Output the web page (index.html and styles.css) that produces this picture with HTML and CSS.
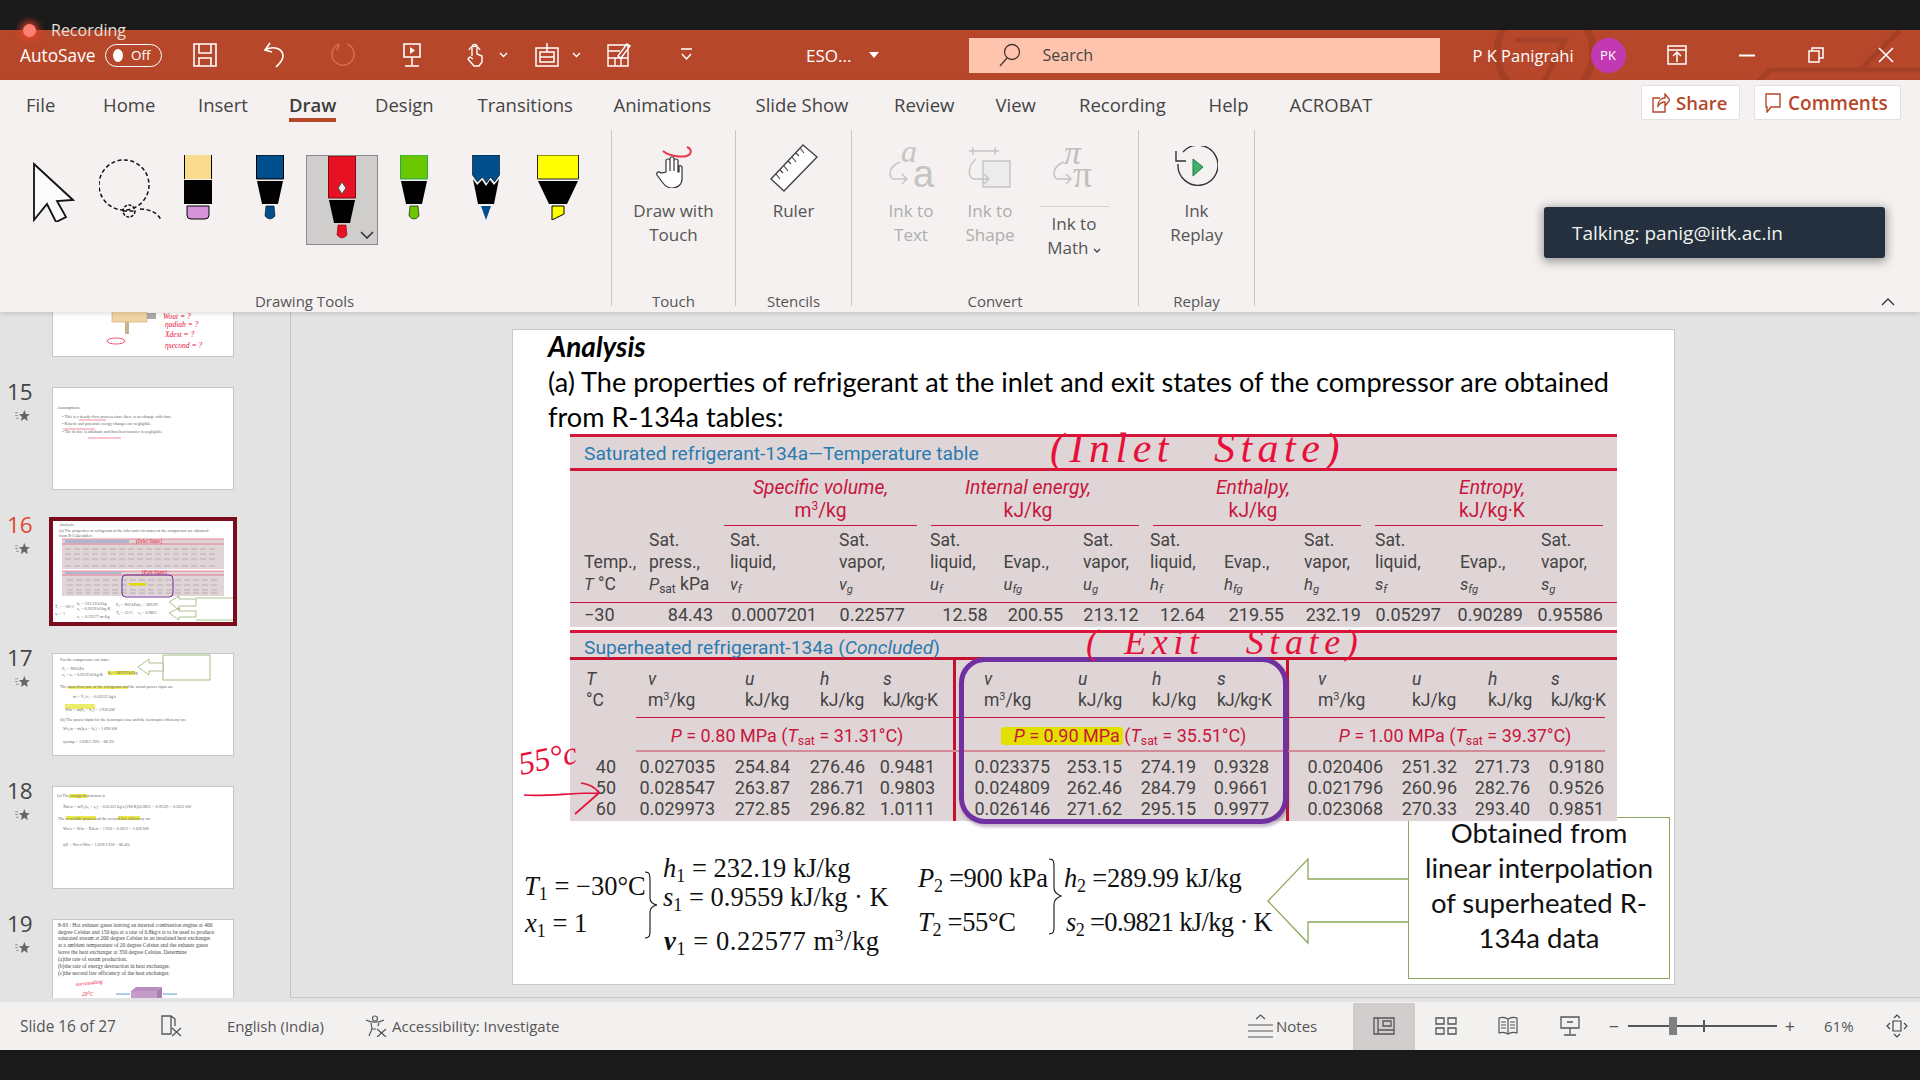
FILE: index.html
```html
<!DOCTYPE html>
<html lang="en">
<head>
<meta charset="utf-8">
<title>PowerPoint - Draw</title>
<link rel="stylesheet" href="styles.css">
</head>
<body>
<svg class="defs" width="0" height="0">
  <symbol id="star" viewBox="0 0 16 13"><path d="M0 3h3M0 6h3M1 9h3" stroke="#777" stroke-width=".8" fill="none"/><path d="M10 0l1.700 4.200 4.300.3-3.300 2.900 1 4.600-3.700-2.500-3.700 2.500 1-4.600L4 4.500l4.300-.3z" fill="#666"/></symbol>
</svg>
<div class="topblack"></div>
<header class="titlebar">
  <span class="rec-dot"></span><span class="rec-label">Recording</span>
  <svg class="decor" viewBox="0 0 500 50" width="500" height="50"><circle cx="125" cy="22" r="48" fill="none" stroke="#8f3a22" stroke-width="7" opacity=".5"/><path d="M95 10h50l-30 60M330 60l20-20h150M440 40l40-40" fill="none" stroke="#8f3a22" stroke-width="5" opacity=".5"/></svg>
  <span class="autosave">AutoSave</span>
  <span class="toggle"><i></i><b>Off</b></span>
  <svg class="qa q-save" width="24" height="24" viewBox="0 0 24 24"><path d="M1 1h22v22H1zM6 1v9h12V1M6 23v-8h12v8" fill="none" stroke="#fff" stroke-width="1.600"/></svg>
  <svg class="qa q-undo" width="22" height="26" viewBox="0 0 22 26"><path d="M7 1L2 8l7 2M2 8c9-5 18-1 18 6 0 5-5 9-7 11" fill="none" stroke="#fff" stroke-width="1.600"/></svg>
  <svg class="qa q-redo" width="24" height="26" viewBox="0 0 24 26"><path d="M8 2a11 11 0 1 0 8 0M8 2l-2 6" fill="none" stroke="#dd6a4e" stroke-width="1.600"/></svg>
  <svg class="qa q-present" width="22" height="24" viewBox="0 0 22 24"><path d="M3 1h16v13H3zM11 14v8M4 23h14" fill="none" stroke="#fff" stroke-width="1.600"/><path d="M9 4l5 3.500-5 3.500z" fill="#fff"/></svg>
  <svg class="qa q-touch" width="18" height="24" viewBox="0 0 18 24"><path d="M5 13V4a2.500 2.500 0 0 1 5 0v7l5 2v6l-3 4H7l-6-7 2-2 3 2M2 7a6 6 0 0 1 11 0" fill="none" stroke="#fff" stroke-width="1.400"/></svg>
  <svg class="chev q-c1" width="9" height="6" viewBox="0 0 9 6"><path d="M1 1l3.500 3.500L8 1" fill="none" stroke="#fff" stroke-width="1.400"/></svg>
  <svg class="qa q-table" width="24" height="24" viewBox="0 0 24 24"><path d="M1 5h22v18H1zM5 9h14v10H5zM12 0v9M5 14h14" fill="none" stroke="#fff" stroke-width="1.500"/></svg>
  <svg class="chev q-c2" width="9" height="6" viewBox="0 0 9 6"><path d="M1 1l3.500 3.500L8 1" fill="none" stroke="#fff" stroke-width="1.400"/></svg>
  <svg class="qa q-form" width="25" height="24" viewBox="0 0 25 24"><path d="M1 2h20v21H1zM1 8h12M1 15h20M8 15v8M14 15v8M11 13L20 1l3 2-9 12z" fill="none" stroke="#fff" stroke-width="1.400"/></svg>
  <svg class="qa q-more" width="11" height="14" viewBox="0 0 11 14"><path d="M0 1h11M1 6l4.500 5L10 6" fill="none" stroke="#fff" stroke-width="1.500"/></svg>
  <span class="doc">ESO...</span>
  <span class="doc-tri"></span>
  <div class="search">
    <svg width="22" height="24" viewBox="0 0 22 24"><circle cx="13" cy="9" r="7.500" fill="none" stroke="#4a3a34" stroke-width="1.300"/><path d="M8 15l-7 8" stroke="#4a3a34" stroke-width="1.300"/></svg>
    <span>Search</span>
  </div>
  <span class="user">P K Panigrahi</span>
  <span class="avatar">PK</span>
  <svg class="qa w-up" width="20" height="20" viewBox="0 0 20 20"><path d="M1 1h18v18H1zM1 5h18M10 17V8M6 11l4-4 4 4" fill="none" stroke="#fff" stroke-width="1.500"/></svg>
  <svg class="qa w-min" width="16" height="3" viewBox="0 0 16 3"><path d="M0 1.500h16" stroke="#fff" stroke-width="2"/></svg>
  <svg class="qa w-res" width="16" height="16" viewBox="0 0 16 16"><path d="M1 4h10v11H1zM4 4V1h11v10h-4" fill="none" stroke="#fff" stroke-width="1.500"/></svg>
  <svg class="qa w-x" width="16" height="16" viewBox="0 0 16 16"><path d="M1 1l14 14M15 1L1 15" stroke="#fff" stroke-width="1.600"/></svg>
</header>

<section class="ribbon">
  <nav class="tabs">
    <span>File</span><span>Home</span><span>Insert</span><span class="active">Draw</span><span>Design</span><span>Transitions</span><span>Animations</span><span>Slide Show</span><span>Review</span><span>View</span><span>Recording</span><span>Help</span><span>ACROBAT</span>
    <div class="tab-actions">
      <button class="act act-share"><svg width="18" height="20" viewBox="0 0 18 20"><path d="M8 5H1v14h12v-6M6 13c0-5 3-8 7-8V1l5 6-5 6V9c-3 0-5 1-7 4z" fill="none" stroke="#b7472a" stroke-width="1.400"/></svg>Share</button>
      <button class="act act-comments"><svg width="16" height="20" viewBox="0 0 16 20"><path d="M1 1h14v13H6l-4 5v-5H1z" fill="none" stroke="#b7472a" stroke-width="1.400"/></svg>Comments</button>
    </div>
  </nav>
  <div class="groups">
    <div class="group g-tools">
      <div class="tools">
        <svg class="tool" width="42" height="60" viewBox="0 0 42 60"><path d="M1 2l39 36-16 1 9 16-10 5-9-18-13 16z" fill="#fbfbfb" stroke="#111" stroke-width="1.800"/></svg>
        <svg class="tool" width="64" height="62" viewBox="0 0 64 62"><circle cx="25" cy="26" r="25" fill="none" stroke="#111" stroke-width="1.500" stroke-dasharray="4 2.500"/><circle cx="30" cy="52" r="6" fill="none" stroke="#111" stroke-width="1.500" stroke-dasharray="3 1.500"/><path d="M24 52h12M41 50c10 0 18 4 21 11" fill="none" stroke="#111" stroke-width="1.500" stroke-dasharray="4 2.500"/></svg>
        <svg class="tool" width="28" height="65" viewBox="0 0 28 65"><path d="M1 0h26v24H1z" fill="#f9db8e"/><path d="M.5 0v24M27.500 0v24" stroke="#000"/><path d="M0 25h28v24H0z" fill="#000"/><path d="M3 51h22v9a4 4 0 0 1-4 4H7a4 4 0 0 1-4-4z" fill="#d593d9" stroke="#000"/></svg>
        <svg class="tool" width="28" height="65" viewBox="0 0 28 65"><path d="M.5 0h27v24H.5z" fill="#004e8c" stroke="#000"/><path d="M1 26h26l-5 23H6z" fill="#000"/><path d="M10 51h8l1 10q-5 6-10 0z" fill="#004e8c" stroke="#000" stroke-width=".6"/></svg>
        <div class="tool-sel">
          <svg width="28" height="84" viewBox="0 0 28 84"><path d="M.5 0h27v42H.5z" fill="#e81123" stroke="#7a0a14"/><path d="M1 44h26l-5 23H6z" fill="#000"/><path d="M10 69h8l1 10q-5 6-10 0z" fill="#e81123" stroke="#7a0a14" stroke-width=".6"/><path d="M14 26l4 6-4 6-4-6z" fill="#eee" stroke="#444"/></svg>
          <svg class="sel-chev" width="14" height="8" viewBox="0 0 14 8"><path d="M1 1l6 6 6-6" fill="none" stroke="#333" stroke-width="1.600"/></svg>
        </div>
        <svg class="tool" width="28" height="65" viewBox="0 0 28 65"><path d="M.5 0h27v24H.5z" fill="#6bc600" stroke="#2a5"/><path d="M1 26h26l-5 23H6z" fill="#000"/><path d="M10 51h8l1 10q-5 6-10 0z" fill="#6bc600" stroke="#000" stroke-width=".6"/></svg>
        <svg class="tool" width="28" height="65" viewBox="0 0 28 65"><path d="M.5 0h27v20l-5 7-4-5-4 6-4-6-5 5-5-7z" fill="#004e8c" stroke="#000" stroke-width=".6"/><path d="M1 24l4 6 5-5 4 6 4-6 4 5 5-6-5 25H6z" fill="#000"/><path d="M9 51h10l-5 14z" fill="#004e8c"/></svg>
        <svg class="tool" width="42" height="65" viewBox="0 0 42 65"><path d="M.5 0h41v24H.5z" fill="#ff0" stroke="#222"/><path d="M1 26h40l-11 23H12z" fill="#000"/><path d="M15 51h12v8l-12 6z" fill="#ff0" stroke="#000"/></svg>
      </div>
      <div class="glabel gl-tools">Drawing Tools</div>
    </div>
    <div class="group g-touch">
      <div class="cmd">
        <svg width="40" height="42" viewBox="0 0 40 42"><path d="M9 5c6 5 22 8 27 3 2-3 0-6-3-7" fill="none" stroke="#e8364e" stroke-width="2"/><path d="M12 26V15a2 2 0 0 1 4 0v10V13a2 2 0 0 1 4 0v12-10a2 2 0 0 1 4 0v11l1 0v-6a2 2 0 0 1 3 1v12c0 6-5 9-10 9-4 0-7-2-9-5l-6-8c-1-3 2-4 4-2z" fill="#fff" stroke="#333" stroke-width="1.200"/></svg>
        <span>Draw with<br>Touch</span>
      </div>
      <div class="glabel">Touch</div>
    </div>
    <div class="group g-stencils">
      <div class="cmd">
        <svg class="ruler" width="48" height="48" viewBox="0 0 48 48"><path d="M33 1l14 12-33 34L1 35z" fill="#fff" stroke="#444" stroke-width="1.400"/><path d="M30 4l4 5M26 9l3 3M22 13l4 5M18 17l3 3M14 22l4 5M10 26l3 3M6 30l4 5" stroke="#444" stroke-width="1.100"/></svg>
        <span>Ruler</span>
      </div>
      <div class="glabel">Stencils</div>
    </div>
    <div class="group g-convert">
      <div class="cmds">
        <div class="cmd cmd-off">
          <svg class="ico" width="46" height="42" viewBox="0 0 46 42"><text x="13" y="16" class="ico-a">a</text><text x="25" y="41" class="ico-b">a</text><path d="M12 16C1 20 0 30 5 33h14M14 28l5 5-5 5" fill="none" stroke="#c4c4c4" stroke-width="1.400"/></svg>
          <span>Ink to<br>Text</span>
        </div>
        <div class="cmd cmd-off c-shape">
          <svg width="44" height="42" viewBox="0 0 44 42"><path d="M1 5h30M5 1v8M27 1v8" stroke="#c4c4c4" stroke-width="1.400"/><path d="M15 15h27v26H15z" fill="#ececec" stroke="#c4c4c4" stroke-width="1.400"/><path d="M8 13C-1 20 0 32 6 33h14M16 28l5 5-5 5" fill="none" stroke="#c4c4c4" stroke-width="1.400"/></svg>
          <span>Ink to<br>Shape</span>
        </div>
        <div class="cmd c-math">
          <svg class="ico" width="44" height="42" viewBox="0 0 44 42"><text x="12" y="18" class="ico-pi">π</text><text x="21" y="41" class="ico-pi2">π</text><path d="M12 16C1 20 0 30 5 33h14M14 28l5 5-5 5" fill="none" stroke="#c0c0c0" stroke-width="1.400"/></svg>
          <i class="cmd-rule"></i>
          <span>Ink to<br>Math <svg width="8" height="6" viewBox="0 0 8 6"><path d="M1 1l3 3 3-3" fill="none" stroke="#444" stroke-width="1.300"/></svg></span>
        </div>
      </div>
      <div class="glabel">Convert</div>
    </div>
    <div class="group g-replay">
      <div class="cmd">
        <svg width="44" height="42" viewBox="0 0 44 42"><path d="M8 5a20 20 0 1 1-5 12M1 4v10h10" fill="none" stroke="#333" stroke-width="1.400" transform="translate(1 1)"/><path d="M19 13l10 8-10 9z" fill="#3fb26b" stroke="#1e7a44"/></svg>
        <span>Ink<br>Replay</span>
      </div>
      <div class="glabel">Replay</div>
    </div>
    <svg class="collapse" width="14" height="8" viewBox="0 0 14 8"><path d="M1 7l6-6 6 6" fill="none" stroke="#333" stroke-width="1.300"/></svg>
  </div>
  <div class="talking">Talking: panig@iitk.ac.in</div>
</section>

<main class="main">
  <aside class="pane">
    <div class="thumb-row">
      <div class="num"></div>
      <svg class="thumb" viewBox="0 0 180 101">
        <rect x="59" y="40" width="35" height="27" fill="#f2d3a5" stroke="#c9a06a" stroke-width=".6"/><rect x="72" y="67" width="4" height="12" fill="#c8b090"/><rect x="94" y="58" width="9" height="6" fill="#aaa"/>
        <g class="th-ink th-big"><text x="110" y="64">Wout = ?</text><text x="112" y="72">ηadiab = ?</text><text x="112" y="82">Xdest = ?</text><text x="112" y="93">ηsecond = ?</text></g>
        <ellipse cx="63" cy="86" rx="9" ry="3" fill="none" stroke="#e8103a" stroke-width=".7"/>
      </svg>
    </div>
    <div class="thumb-row">
      <div class="num">15<svg width="15" height="12"><use href="#star"/></svg></div>
      <svg class="thumb" viewBox="0 0 180 101">
        <g class="th-t"><text x="4" y="21" font-weight="700" font-style="italic">Assumptions:</text><text x="9" y="30">•  This is a steady-flow process since there is no change with time</text><text x="9" y="37">•  Kinetic and potential energy changes are negligible.</text><text x="9" y="45">•  The device is adiabatic and thus heat transfer is negligible.</text></g>
        <path d="M26 32h27M10 41h32M35 50h33" stroke="#e8103a" stroke-width=".5" fill="none"/>
      </svg>
    </div>
    <div class="thumb-row is-active">
      <div class="num">16<svg width="15" height="12"><use href="#star"/></svg></div>
      <svg class="thumb" viewBox="0 0 180 101">
        <g class="th-t"><text x="6" y="5" font-weight="700" font-style="italic">Analysis</text><text x="6" y="11">(a) The properties of refrigerant at the inlet and exit states of the compressor are obtained</text><text x="6" y="16">from R-134a tables:</text></g>
        <rect x="9" y="18" width="162" height="30" fill="#e0d4d6"/><rect x="9" y="50" width="162" height="25" fill="#e0d4d6"/>
        <path d="M9 18h162M9 23h162M9 50h162M9 54h162" stroke="#e0455f" stroke-width=".6"/>
        <path d="M12 28h150M12 33h150M12 38h150M12 45h150M14 59h150M14 64h150M14 69h150M14 72h150" stroke="#b5abb0" stroke-width="1.100" stroke-dasharray="6 3"/>
        <rect x="12" y="19" width="64" height="3" fill="#a9b8d0"/><rect x="12" y="51" width="56" height="2" fill="#a9b8d0"/>
        <g class="th-ink"><text x="83" y="22">(Inlet  State)</text><text x="89" y="53">(Exit  State)</text></g>
        <rect x="69" y="54" width="51" height="22" rx="4" fill="none" stroke="#6a2b95" stroke-width="1"/><rect x="76" y="62" width="17" height="2.500" fill="#e1dc00"/>
        <path d="M143 77h40v22h-40M116 81l10-6v3h17v7h-17v4zM116 92l10-5v3h17v6h-17v3z" fill="#fff" stroke="#8aa860" stroke-width=".7"/>
        <g class="th-t"><text x="2" y="87">T₁ = −30°C</text><text x="2" y="94">x₁ = 1</text><text x="24" y="84">h₁ = 232.19 kJ/kg</text><text x="24" y="89">s₁ = 0.9559 kJ/kg·K</text><text x="24" y="97">v₁ = 0.22577 m³/kg</text><text x="63" y="85">P₂ = 900 kPa</text><text x="63" y="93">T₂ = 55°C</text><text x="85" y="85">h₂ = 289.99</text><text x="85" y="93">s₂ = 0.9821</text></g>
      </svg>
    </div>
    <div class="thumb-row">
      <div class="num">17<svg width="15" height="12"><use href="#star"/></svg></div>
      <svg class="thumb" viewBox="0 0 180 101">
        <rect x="110" y="1" width="47" height="25" fill="#fff" stroke="#7aa050" stroke-width=".7"/><path d="M85 13l11-8v4h14v8H96v4z" fill="#fff" stroke="#8aa860" stroke-width=".7"/>
        <rect x="55" y="17" width="27" height="4" fill="#e8e84a"/><rect x="15" y="32" width="60" height="3" fill="#eded6a"/><rect x="12" y="50" width="30" height="5" fill="#eded6a"/>
        <g class="th-t"><text x="7" y="7">For the compressor exit state:</text><text x="9" y="16">P₂ = 900 kPa</text><text x="9" y="22">s₂ = s₁ = 0.9559 kJ/kg·K</text><text x="55" y="20">h₂ = 289.99 kJ/kg</text><text x="7" y="34">The mass flow rate of the refrigerant and the actual power input are</text><text x="20" y="44">ṁ = V̇₁/v₁ = 0.03322 kg/s</text><text x="12" y="57">Ẇin = ṁ(h₂ − h₁) = 1.920 kW</text><text x="7" y="67">(b) The power input for the isentropic case and the isentropic efficiency are</text><text x="10" y="76">Ẇs,in = ṁ(h₂s − h₁) = 1.696 kW</text><text x="10" y="89" font-weight="700">ηcomp = 1.696/1.920 = 88.3%</text></g>
      </svg>
    </div>
    <div class="thumb-row">
      <div class="num">18<svg width="15" height="12"><use href="#star"/></svg></div>
      <svg class="thumb" viewBox="0 0 180 101">
        <rect x="16" y="7" width="18" height="4" fill="#e8e84a"/><rect x="13" y="29" width="30" height="4" fill="#e8e84a"/><rect x="65" y="29" width="22" height="4" fill="#e8e84a"/>
        <g class="th-t"><text x="4" y="10">(c) The exergy destruction is</text><text x="10" y="21">Ẋdest = ṁT₀(s₂ − s₁) = 0.03322 kg/s (298 K)(0.9821 − 0.9559) = 0.2612 kW</text><text x="5" y="33">The reversible power and the second-law efficiency are</text><text x="10" y="43">Ẇrev = Ẇin − Ẋdest = 1.920 − 0.2612 = 1.659 kW</text><text x="10" y="59">ηII = Ẇrev/Ẇin = 1.659/1.920 = 86.4%</text></g>
      </svg>
    </div>
    <div class="thumb-row">
      <div class="num">19<svg width="15" height="12"><use href="#star"/></svg></div>
      <svg class="thumb" viewBox="0 0 180 101">
        <g class="th-t th-dark"><text x="5" y="7">8-93 : Hot exhaust gases leaving an internal combustion engine at 400</text><text x="5" y="14">degree Celsius and 150 kpa at a rate of 0.8kg/s is to be used to produce</text><text x="5" y="20">saturated stream at 200 degree Celsius in an insulated heat exchanger</text><text x="5" y="27">at a ambient temperature of 20 degree Celsius and the exhaust gases</text><text x="5" y="34">leave the heat exchanger at 350 degree Celsius. Determine</text><text x="5" y="41">(a)the rate of steam production.</text><text x="5" y="48">(b)the rate of exergy destruction in heat exchanger.</text><text x="5" y="55">(c)the second law efficiency of the heat exchanger.</text></g>
        <path d="M78 71l5-4h26l-5 4z" fill="#b88fc0"/><path d="M78 71h26v30H78z" fill="#c49cc9"/><path d="M104 71l5-4v30l-5 4z" fill="#a97eb0"/>
        <path d="M63 74h14M110 74h14" stroke="#3a80c0" stroke-width=".8"/><g class="th-ink"><text x="23" y="66" transform="rotate(-6 23 66)">surrounding</text><text x="29" y="76">20°C</text></g>
      </svg>
    </div>
  </aside>
  <div class="workspace">
    <article class="slide">
      <h1 class="s-head">Analysis</h1>
      <p class="s-text">(a) The properties of refrigerant at the inlet and exit states of the compressor are obtained<br>from R-134a tables:</p>

      <div class="tbl t1">
        <div class="tbl-title">Saturated refrigerant-134a—Temperature table</div>
        <div class="groups-row">
          <div>Specific volume,<br>m<sup>3</sup>/kg</div>
          <div>Internal energy,<br>kJ/kg</div>
          <div>Enthalpy,<br>kJ/kg</div>
          <div>Entropy,<br>kJ/kg·K</div>
        </div>
        <div class="head-row">
          <div>Temp.,<br><em>T</em> °C</div>
          <div>Sat.<br>press.,<br><em>P</em><sub>sat</sub> kPa</div>
          <div>Sat.<br>liquid,<br><em>v<sub>f</sub></em></div>
          <div>Sat.<br>vapor,<br><em>v<sub>g</sub></em></div>
          <div>Sat.<br>liquid,<br><em>u<sub>f</sub></em></div>
          <div>Evap.,<br><em>u<sub>fg</sub></em></div>
          <div>Sat.<br>vapor,<br><em>u<sub>g</sub></em></div>
          <div>Sat.<br>liquid,<br><em>h<sub>f</sub></em></div>
          <div>Evap.,<br><em>h<sub>fg</sub></em></div>
          <div>Sat.<br>vapor,<br><em>h<sub>g</sub></em></div>
          <div>Sat.<br>liquid,<br><em>s<sub>f</sub></em></div>
          <div>Evap.,<br><em>s<sub>fg</sub></em></div>
          <div>Sat.<br>vapor,<br><em>s<sub>g</sub></em></div>
        </div>
        <div class="data-row t1-data">
          <div class="left">−30</div><div>84.43</div><div>0.0007201</div><div>0.22577</div><div>12.58</div><div>200.55</div><div>213.12</div><div>12.64</div><div>219.55</div><div>232.19</div><div>0.05297</div><div>0.90289</div><div>0.95586</div>
        </div>
      </div>

      <div class="tbl t2">
        <div class="tbl-title">Superheated refrigerant-134a (<em>Concluded</em>)</div>
        <div class="t2-head">
          <div><em>T</em><br>°C</div>
          <div><em>v</em><br>m<sup>3</sup>/kg</div><div><em>u</em><br>kJ/kg</div><div><em>h</em><br>kJ/kg</div><div><em>s</em><br>kJ/kg·K</div>
          <div><em>v</em><br>m<sup>3</sup>/kg</div><div><em>u</em><br>kJ/kg</div><div><em>h</em><br>kJ/kg</div><div><em>s</em><br>kJ/kg·K</div>
          <div><em>v</em><br>m<sup>3</sup>/kg</div><div><em>u</em><br>kJ/kg</div><div><em>h</em><br>kJ/kg</div><div><em>s</em><br>kJ/kg·K</div>
        </div>
        <div class="press-row">
          <div><em>P</em> = 0.80 MPa (<em>T</em><sub>sat</sub> = 31.31°C)</div>
          <div><em>P</em> = 0.90 MPa (<em>T</em><sub>sat</sub> = 35.51°C)</div>
          <div><em>P</em> = 1.00 MPa (<em>T</em><sub>sat</sub> = 39.37°C)</div>
        </div>
        <div class="data-row t2-data">
          <div>40</div><div>0.027035</div><div>254.84</div><div>276.46</div><div>0.9481</div><div>0.023375</div><div>253.15</div><div>274.19</div><div>0.9328</div><div>0.020406</div><div>251.32</div><div>271.73</div><div>0.9180</div>
          <div>50</div><div>0.028547</div><div>263.87</div><div>286.71</div><div>0.9803</div><div>0.024809</div><div>262.46</div><div>284.79</div><div>0.9661</div><div>0.021796</div><div>260.96</div><div>282.76</div><div>0.9526</div>
          <div>60</div><div>0.029973</div><div>272.85</div><div>296.82</div><div>1.0111</div><div>0.026146</div><div>271.62</div><div>295.15</div><div>0.9977</div><div>0.023068</div><div>270.33</div><div>293.40</div><div>0.9851</div>
        </div>
        <i class="vrule vr1"></i><i class="vrule vr2"></i>
        <i class="hilite"></i>
      </div>

      <i class="purple"></i>

      <div class="ink ink-inlet">(Inlet&nbsp; State)</div>
      <div class="ink ink-exit">( Exit&nbsp; State)</div>
      <div class="ink ink-ssc">55°c</div>
      <svg class="ink-arrow" width="82" height="40" viewBox="0 0 82 40"><path d="M1 20c20 2 45-2 74-2M58 8c8 1 14 4 18 10L52 39" fill="none" stroke="#e8103a" stroke-width="1.700"/></svg>

      <div class="eq e-t1"><i>T</i><sub>1</sub> = −30°C</div>
      <div class="eq e-x1"><i>x</i><sub>1</sub> = 1</div>
      <div class="eq e-h1"><i>h</i><sub>1</sub> = 232.19 kJ/kg</div>
      <div class="eq e-s1"><i>s</i><sub>1</sub> = 0.9559 kJ/kg · K</div>
      <div class="eq e-v1"><b><i>v</i></b><sub>1</sub> = 0.22577 m<sup>3</sup>/kg</div>
      <div class="eq tight e-p2"><i>P</i><sub>2</sub> =900 kPa</div>
      <div class="eq tight e-t2"><i>T</i><sub>2</sub> =55°C</div>
      <div class="eq tight e-h2"><i>h</i><sub>2</sub> =289.99 kJ/kg</div>
      <div class="eq tight e-s2"><i>s</i><sub>2</sub> =0.9821 kJ/kg · K</div>
      <svg class="brace b1" width="14" height="68" viewBox="0 0 14 68"><path d="M1 1c5 0 5 3 5 8v18c0 4 2 6 7 7-5 1-7 3-7 7v18c0 5 0 8-5 8" fill="none" stroke="#111" stroke-width="1.100"/></svg>
      <svg class="brace b2" width="14" height="78" viewBox="0 0 14 78"><path d="M1 1c5 0 5 3 5 8v21c0 4 2 6 7 8-5 2-7 4-7 8v22c0 5 0 8-5 8" fill="none" stroke="#111" stroke-width="1.100"/></svg>

      <svg class="callout-arrows" width="145" height="90" viewBox="0 0 145 90"><path d="M144 22H41V2L1 44l40 42V65h103" fill="#fff" stroke="#8ba85c" stroke-width="1.300"/></svg>
      <div class="callout"><div class="callout-text">Obtained from<br>linear interpolation<br>of superheated R-<br>134a data</div></div>
    </article>
  </div>
</main>

<footer class="status">
  <span class="st-slide">Slide 16 of 27</span>
  <svg class="st-spell" width="22" height="22" viewBox="0 0 22 22"><path d="M10 19H1V1h9l4 3v7M10 1v18M11 13l9 8M20 13l-9 8" fill="none" stroke="#555" stroke-width="1.300"/></svg>
  <span class="st-lang">English (India)</span>
  <svg class="st-acc" width="22" height="22" viewBox="0 0 22 22"><circle cx="10" cy="3.500" r="2.500" fill="none" stroke="#555" stroke-width="1.200"/><path d="M1 5c5 3 13 3 18 0M6 8l1 6-3 7M14 8l-1 3M7 14h4M12 14l9 8M21 14l-9 8" fill="none" stroke="#555" stroke-width="1.200"/></svg>
  <span class="st-acct">Accessibility: Investigate</span>
  <svg class="st-notes" width="25" height="24" viewBox="0 0 25 24"><path d="M8 5l4.500-4L17 5M0 11h25M0 17h25M0 23h25" fill="none" stroke="#555" stroke-width="1.200"/></svg>
  <span class="st-notet">Notes</span>
  <div class="st-view on"><svg width="22" height="18" viewBox="0 0 22 18"><path d="M1 1h20v16H1zM5 1v16M5 13h16M10 4h8v5h-8z" fill="none" stroke="#555" stroke-width="1.300"/></svg></div>
  <div class="st-view"><svg width="22" height="18" viewBox="0 0 22 18"><path d="M1 1h8v6H1zM13 1h8v6h-8zM1 11h8v6H1zM13 11h8v6h-8z" fill="none" stroke="#555" stroke-width="1.300"/></svg></div>
  <div class="st-view"><svg width="20" height="20" viewBox="0 0 20 20"><path d="M10 3C7 1 4 1 1 2v15c3-1 6-1 9 1 3-2 6-2 9-1V2c-3-1-6-1-9 1zM10 3v15M3 6h5M3 9h5M3 12h5M12 6h5M12 9h5M12 12h5" fill="none" stroke="#555" stroke-width="1.200"/></svg></div>
  <div class="st-view"><svg width="20" height="20" viewBox="0 0 20 20"><path d="M1 1h18v11H1zM10 12v6M4 19h12M7 6h6" fill="none" stroke="#555" stroke-width="1.300"/></svg></div>
  <div class="zoom">
    <span class="z-sign">−</span>
    <div class="slider"><i class="tick"></i><i class="knob"></i></div>
    <span class="z-sign z-plus">+</span>
  </div>
  <span class="st-pct">61%</span>
  <svg class="st-fit" width="22" height="24" viewBox="0 0 22 24"><path d="M7 7h8v10H7zM8 4l3-3 3 3M8 20l3 3 3-3M4 9l-3 3 3 3M18 9l3 3-3 3" fill="none" stroke="#444" stroke-width="1.200"/></svg>
</footer>
<div class="botblack"></div>
</body>
</html>
```
FILE: styles.css
```css
*{box-sizing:border-box}
html,body{margin:0;padding:0}
body{width:1920px;height:1080px;overflow:hidden;display:flex;flex-direction:column;background:#1a1a1a;font-family:"Open Sans","Liberation Sans",sans-serif;color:#444}
.defs{position:absolute}
.topblack{height:30px;background:#1a1a1a;flex:none}
.botblack{height:30px;background:#1a1a1a;flex:none}

/* title bar */
.titlebar{height:50px;flex:none;background:#b7472a;display:flex;align-items:center;position:relative;color:#fff;padding-left:20px}
.decor{position:absolute;right:0;top:0;pointer-events:none;overflow:hidden}
.rec-dot{position:absolute;left:23px;top:-6px;width:13px;height:13px;border-radius:50%;background:#ff8070;box-shadow:0 0 7px 3px rgba(240,70,50,.75)}
.rec-label{position:absolute;left:51px;top:-10px;font-size:16px;line-height:20px;color:#e6e0dc}
.autosave{font-size:17.300px;width:76px;white-space:nowrap;position:relative}
.toggle{margin-left:9px;width:57px;height:23px;border:1.500px solid #fff;border-radius:12px;display:flex;align-items:center;padding-left:7px;gap:8px;position:relative}
.toggle i{width:10px;height:13px;border-radius:50%;background:#fff}
.toggle b{font-weight:400;font-size:13.500px}
.qa,.chev{flex:none;position:relative}
.q-save{margin-left:31px}.q-undo{margin-left:46px}.q-redo{margin-left:46px}.q-present{margin-left:46px}.q-touch{margin-left:44px}
.q-c1{margin-left:14px}.q-table{margin-left:27px}.q-c2{margin-left:13px}.q-form{margin-left:26px}.q-more{margin-left:49px}
.doc{margin-left:114px;width:46px;font-size:17px;position:relative}
.doc-tri{margin-left:17px;width:0;height:0;border-left:5px solid transparent;border-right:5px solid transparent;border-top:6px solid #fff;position:relative}
.search{margin-left:89.500px;width:471px;height:35px;background:#ffc4ae;display:flex;align-items:center;color:#444;font-size:16px;padding-left:30px;gap:22px;position:relative}
.user{margin-left:33px;width:101px;font-size:16.500px;white-space:nowrap;position:relative}
.avatar{margin-left:17px;width:35px;height:35px;border-radius:50%;background:#c239b3;font-size:13px;display:flex;align-items:center;justify-content:center;position:relative}
.w-up{margin-left:41px}.w-min{margin-left:52px}.w-res{margin-left:53px}.w-x{margin-left:54px}

/* ribbon */
.ribbon{height:232px;flex:none;background:#f4f1f0;position:relative;box-shadow:0 2px 4px rgba(0,0,0,.12);z-index:2}
.tabs{height:50px;display:grid;grid-template-columns:77px 95px 91px 86px 102.500px 136px 142px 138.500px 101.500px 83.500px 129.500px 81px auto;justify-items:start;padding:0 0 0 26px;font-size:18.500px;color:#444;position:relative}
.tabs>span{white-space:nowrap;line-height:50px;height:50px;position:relative}
.tabs .active{font-weight:600;color:#3c3c3c}
.tabs .active::after{content:"";position:absolute;left:0;right:0;top:38px;height:4px;background:#b7472a}
.tab-actions{position:absolute;left:1641px;top:5px;display:flex;gap:14px}
.act{height:35px;border:1px solid #e4e0df;background:#fff;border-radius:2px;color:#b7472a;font:600 18.500px "Open Sans",sans-serif;display:flex;align-items:center;gap:6px;padding:0 0 0 10px}
.act-share{width:99px}.act-comments{width:147px;gap:7px;font-size:19px}
.groups{height:176px;display:flex;position:relative}
.group{display:flex;flex-direction:column;justify-content:space-between;border-right:1px solid #c8c6c4;flex:none;align-items:center}
.g-tools{width:612px;align-items:flex-start}.g-touch{width:124px}.g-stencils{width:116px}.g-convert{width:287px}.g-replay{width:116px}
.glabel{font-size:15px;line-height:20px;margin-bottom:-5px;color:#555}
.gl-tools{align-self:center;margin-left:-2px}
.tools{display:grid;grid-template-columns:66px 85px 72px 50px 94px 72px 65px 42px;padding:25px 0 0 33px;align-items:start;height:120px}
.tool:first-child{margin-top:7px}
.tool:nth-child(2){margin-top:4px}
.tool-sel{width:72px;height:90px;background:#d0cecc;border:1px solid #8a8a8a;position:relative;padding-left:21px;display:block}
.tool-sel svg{display:block}
.tool-sel .sel-chev{position:absolute;left:53px;top:75px}
.cmd{display:flex;flex-direction:column;align-items:center;padding-top:16px;font-size:17px;line-height:24px;text-align:center;color:#555}
.cmd>svg{flex:none;height:42px;margin-bottom:11px}
.cmd>svg.ruler{height:48px;margin:-2px 0 7px}
.cmd>svg.ico{overflow:visible}
.cmds{display:flex;justify-content:flex-start;padding-left:37px;align-self:stretch}
.cmd-off{color:#adadad;width:44px}
.c-shape{margin-left:35px}
.c-math{margin-left:27px;width:70px;position:relative}
.c-math>svg{margin-bottom:0}
.cmd-rule{display:block;width:69px;height:1px;background:#d4d2d0;margin:18px 0 5px}
.cmd span{white-space:nowrap}
.ico-a{font:italic 32px "Liberation Serif",serif;fill:#c4c4c4}
.ico-b{font:38px "Liberation Sans",sans-serif;fill:#c4c4c4}
.ico-pi{font:italic 34px "Liberation Serif",serif;fill:#c0c0c0}
.ico-pi2{font:38px "Liberation Serif",serif;fill:#c0c0c0}
.collapse{position:absolute;left:1881px;top:168px}
.talking{position:absolute;left:1544px;top:127px;width:341px;height:51px;background:#24303d;border-radius:3px;color:#f2f2f2;font-size:19px;line-height:53px;padding-left:28px;box-shadow:0 2px 10px 2px rgba(0,0,0,.35)}

/* main */
.main{height:690px;flex:none;display:flex;background:#e3e3e3;overflow:hidden}
.pane{width:291px;flex:none;height:686px;border-right:1.500px solid #c3c3c3;overflow:hidden;padding-top:1px}
.thumb-row{display:flex;height:101px;margin-bottom:32px;position:relative}
.thumb-row:first-child{margin-top:-58px}
.thumb-row .num{width:53px;font-size:22.500px;line-height:26px;color:#444;padding:0 0 0 7px;margin-top:-9px;display:flex;flex-direction:column}
.num svg{margin:5px 0 0 8px}
.thumb{width:180px;height:101px;background:#fff;box-shadow:0 0 0 1px #c6c6c6;display:block}
.is-active .num{color:#e0472e}
.is-active .thumb{box-shadow:0 0 0 4px #7a0c1e}
.th-t text{font:4.200px "Liberation Serif",serif;fill:#666}
.th-dark text{fill:#444;font-size:5.500px}
.th-ink text{font:italic 5.500px "Liberation Serif",serif;fill:#e8103a}
.th-big text{font-size:7.500px}
.workspace{flex:1;height:686px;border-bottom:1.500px solid #c8c8c8;padding:18px 0 0 222px}
.slide{display:flow-root;width:1161px;height:654px;background:#fff;box-shadow:0 0 0 1px #c8c8c8;position:relative;color:#000}
.s-head{margin:-1px 0 0;padding-left:35px;font:italic 700 28px/35px Lato,sans-serif;height:35px}
.s-text{margin:0;padding-left:35px;font:27.100px/35px Lato,sans-serif;white-space:nowrap;height:70px}

/* textbook tables */
.tbl{margin-left:57px;width:1047px;background:#dfd5d6;font-family:Roboto,"Liberation Sans",sans-serif;font-size:17.500px;color:#444;position:relative;z-index:1}
.tbl em{font-style:italic}
.tbl sub{font-size:.68em;line-height:0;vertical-align:-.25em}
.tbl sup{font-size:.62em;line-height:0;vertical-align:.55em}
.tbl-title{color:#2a7bb0;font-size:19.200px;padding-left:14px;white-space:nowrap}
.t1{margin-top:0;height:193px}
.t1 .tbl-title{height:37px;line-height:33px;border-top:3px solid #d5153a;border-bottom:3px solid #d5153a}
.groups-row{display:grid;grid-template-columns:193px 208px 208px 228px;column-gap:14px;margin-left:154px;height:55px;color:#c8163c;text-align:center;line-height:23px;padding-top:5px;font-size:19.300px}
.groups-row>div{border-bottom:1.500px solid #c8163c;height:50px;white-space:nowrap}
.groups-row>div:nth-child(2){padding-right:14px}
.groups-row>div:nth-child(3){padding-right:8px}
.groups-row>div:nth-child(4){padding-left:6px}
.groups-row>div::first-line{font-style:italic}
.head-row{display:grid;grid-template-columns:65px 81px 109px 91px 73.500px 79.500px 67px 74px 80px 71px 85px 81px 76px;padding-left:14px;height:77px;line-height:22px;align-items:end;padding-bottom:6px;border-bottom:1.500px solid #c8163c}
.head-row em{font-size:.95em}
.data-row{display:grid;padding-left:14px;text-align:right;font-size:18px;white-space:nowrap}
.t1-data{grid-template-columns:65px 64px 104px 88px 82.500px 75.500px 75.600px 66.400px 79px 77px 80px 82px 80px;line-height:24px}
.data-row .left{text-align:left}
.t2{margin-top:3px;height:191px}
.t2 .tbl-title{height:30px;line-height:30px;border-top:3px solid #d5153a;border-bottom:3px solid #c8102e}
.t2-head{display:grid;grid-template-columns:62px 97px 75px 63px 101px 94px 74px 65px 101px 94px 76px 63px 66px;padding-left:16px;height:57px;line-height:21px;padding-top:9px}
.t2-head>div:nth-child(4n+5){letter-spacing:-.8px}
.press-row{display:grid;grid-template-columns:302px 384px 266px;margin-left:66px;width:969px;height:35px;line-height:36px;color:#c8163c;text-align:center;white-space:nowrap;border-top:1px solid #c8163c;border-bottom:2px solid #d58a98;font-size:18px;position:relative;z-index:1}
.t2-data{grid-template-columns:30px 99px 75px 75px 70px 115px 72px 74px 73px 114px 74px 73px 74px;padding-left:16px;padding-top:4px;line-height:21px}
.vrule{position:absolute;width:3px;background:#c8102e;top:30px;bottom:0}
.vr1{left:383px}.vr2{left:716px}
.hilite{position:absolute;left:431px;top:97px;width:122px;height:18px;background:#e3e000;border-radius:3px}
.purple{position:absolute;left:446px;top:327px;width:329px;height:167px;border:5px solid #7030a0;border-radius:26px;box-shadow:1px 3px 3px rgba(90,60,110,.35);z-index:2}

/* ink annotations */
.ink{position:absolute;color:#e8103a;font-family:"Liberation Serif",serif;font-style:italic;white-space:nowrap;z-index:3;line-height:1}
.ink-inlet{left:537px;top:97px;font-size:42px;letter-spacing:5.500px;word-spacing:4px}
.ink-exit{left:573px;top:294px;font-size:36px;letter-spacing:5.600px;word-spacing:6px}
.ink-ssc{left:5px;top:412px;font-size:32px;transform:rotate(-12deg)}
.ink-arrow{position:absolute;left:10px;top:445px;z-index:3}

/* equations */
.eq{position:absolute;font-family:"Liberation Serif",serif;font-size:26.500px;line-height:32px;white-space:nowrap;color:#111}
.eq sub{font-size:.68em;line-height:0;vertical-align:-.3em}
.eq sup{font-size:.65em;line-height:0;vertical-align:.55em}
.tight{letter-spacing:-.3px}
.e-t1{left:11px;top:540px}.e-x1{left:12px;top:577px}
.e-h1{left:150px;top:522px}.e-s1{left:150px;top:551px}.e-v1{left:151px;top:595px;letter-spacing:.6px}
.e-p2{left:405px;top:532px}.e-t2{left:405px;top:576px}
.e-h2{left:551px;top:532px;letter-spacing:-.2px}.e-s2{left:553px;top:576px;letter-spacing:-.65px}
.brace{position:absolute}
.b1{left:131px;top:541px}.b2{left:535px;top:528px}
.callout-arrows{position:absolute;left:754px;top:527px;overflow:visible}
.callout{position:absolute;left:895px;top:487px;width:262px;height:162px;background:#fff;border:1.300px solid #8ba85c;font:27.500px/35px Lato,sans-serif;text-align:center;color:#111}
.callout-text{margin-top:-3px}

/* status bar */
.status{height:48px;flex:none;background:#f3f0f0;display:flex;align-items:center;font-size:15px;color:#555;padding-left:20px;white-space:nowrap}
.st-slide{width:96px;font-size:15.400px}
.st-spell{margin-left:45px}
.st-lang{margin-left:44px;width:97px}
.st-acc{margin-left:41px}
.st-acct{margin-left:5px;width:166px}
.st-notes{margin-left:690px}
.st-notet{margin-left:3px;width:41px}
.st-view{width:62px;height:47px;display:flex;align-items:center;justify-content:center;flex:none}
.st-view.on{background:#d0cdcc;margin-left:36px}
.zoom{display:flex;align-items:center;margin-left:7px}
.z-sign{width:12px;font-size:18px;line-height:18px;text-align:center;color:#555}
.z-plus{margin-left:7px}
.slider{width:149px;height:2px;background:#555;margin-left:8px;position:relative}
.knob{position:absolute;left:41px;top:-8px;width:8px;height:18px;background:#808080}
.tick{position:absolute;left:75px;top:-5px;width:1.500px;height:12px;background:#555}
.st-pct{margin-left:28px;width:30px}
.st-fit{margin-left:32px}
```
